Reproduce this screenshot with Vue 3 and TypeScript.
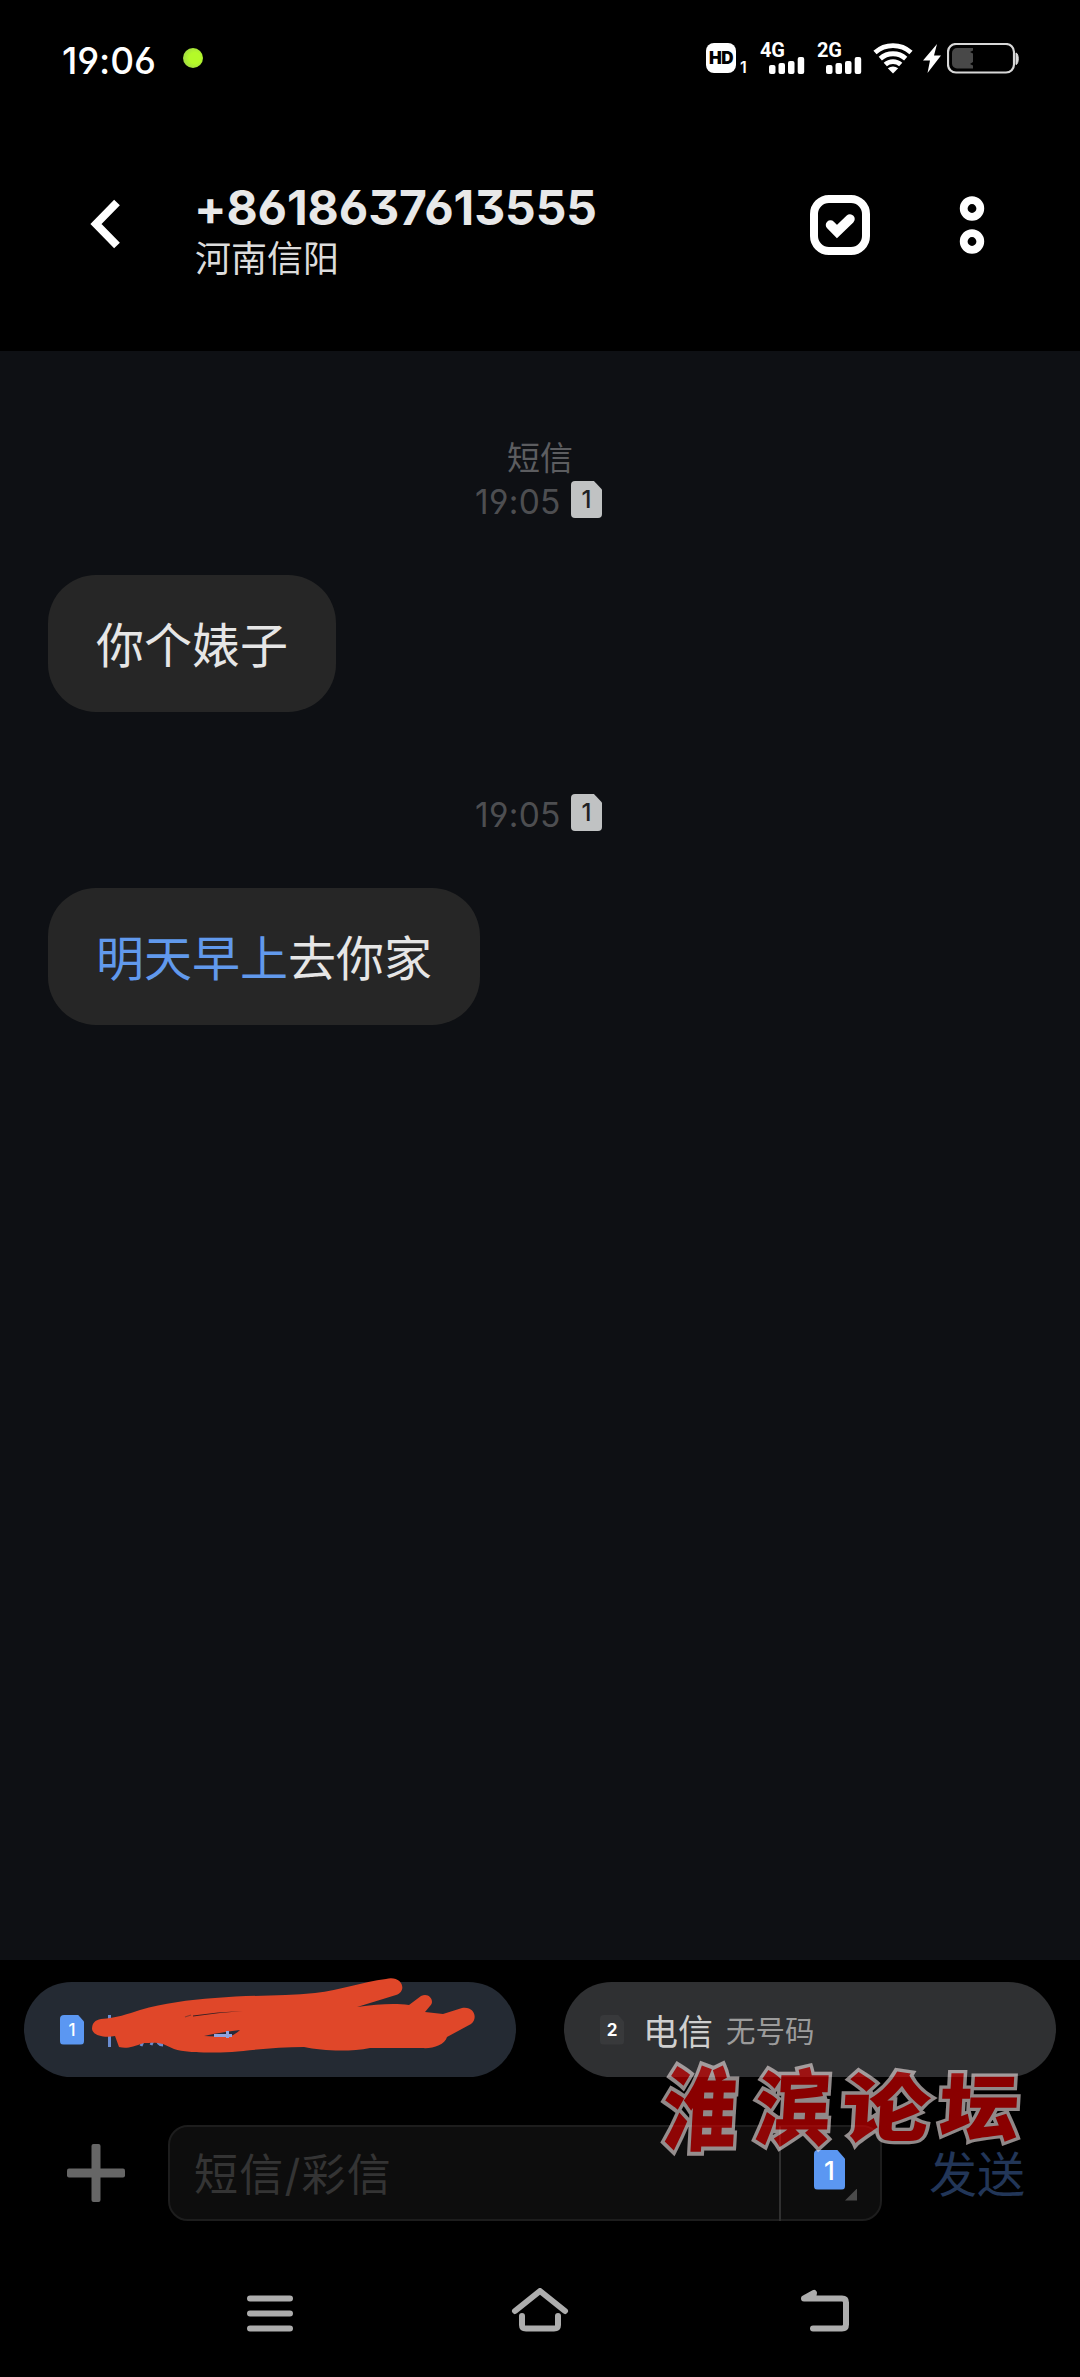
<script setup lang="ts">
interface Part { text: string; link?: boolean }
interface Message { id: number; label?: string; time: string; sim: number; parts: Part[] }

const messages: Message[] = [
  { id: 1, label: '短信', time: '19:05', sim: 1, parts: [{ text: '你个婊子' }] },
  { id: 2, time: '19:05', sim: 1, parts: [{ text: '明天早上', link: true }, { text: '去你家' }] },
]
const networks = ['4G', '2G']
const watermark = ['淮', '滨', '论', '坛']
</script>

<template>
  <div class="screen">
    <div class="status">
      <span class="clock">19:06</span>
      <i class="dot"></i>
      <div class="indicators">
        <span class="hd">HD</span>
        <span class="hd-sub">1</span>
        <div v-for="n in networks" :key="n" class="net">
          <span>{{ n }}</span>
          <svg width="36" height="17" viewBox="0 0 36 17" fill="#fff">
            <rect x="0" y="8" width="6.5" height="9" rx="2" />
            <rect x="9.5" y="6" width="6.5" height="11" rx="2" />
            <rect x="19" y="4" width="6.5" height="13" rx="2" />
            <rect x="28.7" y="0" width="6.5" height="17" rx="2" />
          </svg>
        </div>
        <svg class="wifi" width="40" height="32" viewBox="0 0 40 32" fill="none" stroke="#fff" stroke-width="4.8">
          <path d="M2 10.5a27 27 0 0 1 36 0" />
          <path d="M7.3 16.6a19 19 0 0 1 25.4 0" />
          <path d="M12.3 22.5a11.500 11.500 0 0 1 15.4 0" />
          <path d="M14.800 26.300Q20 22.500 25.200 26.300L20 31.500z" fill="#fff" stroke="none" />
        </svg>
        <svg class="bolt" width="18" height="29" viewBox="0 0 18 29" fill="#fff">
          <path d="M14 0L0 16.500h7L4.500 29 18 11.500h-7z" />
        </svg>
        <svg class="battery" width="73" height="31" viewBox="0 0 73 31">
          <rect x="1" y="1" width="66" height="28.500" rx="8" fill="none" stroke="#d8d8d8" stroke-width="2.200" />
          <path d="M10 5h16v2.500l-3 1.500 3 1.500V19l-3 2 3 1.500V25.500H10a5 5 0 0 1-5-5V10a5 5 0 0 1 5-5z" fill="#484848" />
          <path d="M69 10c3 .5 3 11 0 11.500z" fill="#ddd" stroke="#ddd" />
        </svg>
      </div>
    </div>

    <header class="header">
      <svg class="back" width="34" height="52" viewBox="0 0 34 52" fill="none" stroke="#fff" stroke-width="8">
        <path d="M28 4.500L7 26l21 21.500" />
      </svg>
      <div class="contact">
        <div class="number">+8618637613555</div>
        <div class="place">河南信阳</div>
      </div>
      <svg class="select" width="60" height="60" viewBox="0 0 60 60" fill="none" stroke="#fff">
        <rect x="4" y="4" width="52" height="52" rx="15" stroke-width="8" />
        <path d="M20.500 30l6.500 6.500 13-12.500" stroke-width="9.500" stroke-linecap="round" />
      </svg>
      <svg class="more" width="26" height="60" viewBox="0 0 26 60" fill="none" stroke="#fff" stroke-width="7.800">
        <circle cx="13" cy="13.500" r="8.300" /><circle cx="13" cy="46.500" r="8.300" />
      </svg>
    </header>

    <main class="chat">
      <section v-for="m in messages" :key="m.id" class="entry">
        <div v-if="m.label" class="label">{{ m.label }}</div>
        <div class="meta">
          <span class="time">{{ m.time }}</span>
          <span class="sim grey">{{ m.sim }}</span>
        </div>
        <div class="bubble"><span v-for="p in m.parts" :key="p.text" :class="{ link: p.link }">{{ p.text }}</span></div>
      </section>
    </main>

    <footer class="footer">
      <div class="pills">
        <div class="pill active">
          <span class="sim small blue">1</span>
          <svg class="scribble" width="492" height="95" viewBox="24 1982 492 95">
            <path d="M109.500 2015v32M141 2046l3-7M151 2045l4-9M157 2037q0 8 6 8" fill="none" stroke="#6a8cd0" stroke-width="3" />
            <path
              d="M101 2019C116 2018 128 2014 140 2010C164 2003 188 2000 215 1998C250 1995 285 1996 315 1993C341 1990 362 1982 386 1979C402 1975 408 1991 396 1995L357 2007C378 2004 395 2003 409 2005L421 1996C430 1992 435 2002 430 2006L425 2012L443 2014L462 2008C475 2006 478 2019 471 2024L447 2037C445 2045 432 2049 422 2048H370C350 2052 322 2051 304 2047C280 2047 252 2050 232 2052C208 2053 187 2053 174 2049L163 2044C155 2042 151 2043 144 2043C132 2047 127 2049 119 2047L115 2036C105 2038 93 2036 92 2029C92 2023 95 2020 101 2019Z"
              fill="#e04729" />
            <path d="M185 2017l6-2" fill="none" stroke="#8a3a2c" stroke-width="1.200" />
            <path d="M193 2015.500q25-4 50-4.500-24 1.500-50 5.500z" fill="#352025" />
            <path d="M204 2036q18-4 36-6-5 5-12 7z" fill="#272b3a" />
            <path d="M214 2035.500h18M227.500 2031v7" stroke="#8fa3df" stroke-width="3" />
          </svg>
        </div>
        <div class="pill">
          <span class="sim small dark">2</span>
          <span class="carrier">电信</span>
          <span class="nonumber">无号码</span>
        </div>
      </div>

      <div class="compose">
        <svg class="plus" width="58" height="58" viewBox="0 0 58 58" fill="#666">
          <rect x="0" y="24.500" width="58" height="9" rx="2" /><rect x="24.500" y="0" width="9" height="58" rx="2" />
        </svg>
        <div class="field">
          <span class="placeholder">短信/彩信</span>
          <div class="picker">
            <span class="sim blue">1</span>
            <i class="corner"></i>
          </div>
        </div>
        <span class="send">发送</span>
      </div>

      <div class="watermark">
        <span v-for="(c, i) in watermark" :key="c" :class="'w' + i">{{ c }}</span>
      </div>
    </footer>

    <nav class="nav">
      <svg width="46" height="44" viewBox="0 0 46 44"><path d="M3 10.500h40M3 25.500h40M3 40.500h40" /></svg>
      <svg width="58" height="44" viewBox="0 0 58 44">
        <path d="M4 23L29 3l25 20M11 28v9q0 3.500 4 3.500h28q4 0 4-3.500v-9" />
      </svg>
      <svg width="50" height="44" viewBox="0 0 50 44">
        <path d="M4 10.500h38q4 0 4 4v22q0 4-4 4H13M4 10.500L14 5l-1 4z" />
      </svg>
    </nav>
  </div>
</template>

<style>
body { background: #000; }
</style>

<style scoped>
.screen {
  width: 1080px;
  height: 2377px;
  background: #000;
  color: #e8e8e8;
  font-family: Inter, "Noto Sans CJK SC", sans-serif;
  font-feature-settings: "ss01";
  display: flex;
  flex-direction: column;
  overflow: hidden;
}
svg { display: block; flex: none; }
span { white-space: nowrap; }

.status { height: 117px; display: flex; align-items: flex-start; padding: 43px 60px 0 62px; box-sizing: border-box; }
.clock { width: 121px; font-size: 37px; line-height: 35px; font-weight: 500; color: #fff; letter-spacing: -.1px; }
.dot { width: 20px; height: 20px; margin-top: 5px; border-radius: 50%; background: radial-gradient(circle at 60% 50%, #b4fa28 35%, #a2dc42 75%); }
.indicators { margin-left: auto; display: flex; align-items: flex-start; height: 32px; color: #fff; }
.hd { width: 30px; height: 30px; border-radius: 8px; background: #fff; color: #000; font: 900 17px/31px Inter, sans-serif; text-align: center; letter-spacing: -.5px; }
.hd-sub { width: 24px; padding-left: 4px; box-sizing: border-box; font: 600 16px/16px Inter, sans-serif; margin-top: 16px; }
.net { width: 57px; display: flex; flex-direction: column; }
.net span { font: 700 20px/15px Roboto, sans-serif; height: 14px; letter-spacing: -.3px; }
.net svg { margin-left: 9px; }
.wifi { margin: -1px 0 0 -1px; }
.bolt { margin: 1px 0 0 10px; }
.battery { margin-left: 6px; }

.header { height: 234px; display: flex; align-items: flex-start; padding-left: 89px; box-sizing: border-box; }
.back { margin-top: 81px; }
.contact { width: 612px; margin-left: 72px; padding-top: 62px; }
.number { font-size: 48px; line-height: 58px; font-weight: 650; letter-spacing: -.1px; margin-left: -1px; }
.place { font-size: 36px; line-height: 44px; color: #dcdcdc; }
.select { margin: 78px 0 0 3px; }
.more { margin: 78px 0 0 89px; }

.chat { height: 1609px; box-sizing: border-box; background: #0e1014; padding: 86px 48px 0; }
.entry { display: flex; flex-direction: column; margin-bottom: 79px; }
.label { font-size: 33px; line-height: 42px; text-align: center; color: #5c5d60; height: 41px; }
.meta { display: flex; justify-content: center; align-items: center; height: 44px; gap: 12px; }
.meta .sim { margin: -1px 1px 0 -1px; }
.time { width: 83px; font-size: 33.500px; line-height: 44px; color: #4d4e51; padding-top: 3px; letter-spacing: .3px; margin-left: -2px; margin-right: 2px; }
.bubble { align-self: flex-start; height: 137px; box-sizing: border-box; margin-top: 53px; padding: 0 48px; border-radius: 48px; background: #262626; font-size: 48px; line-height: 142px; color: #e6e6e6; }
.link { color: #6199ec; }

.sim { display: block; width: 31px; height: 37px; border-radius: 4px; clip-path: polygon(0 0, 74% 0, 100% 23%, 100% 100%, 0 100%); font: 500 24px/37px Inter, sans-serif; text-align: center; flex: none; }
.grey { background: #c0c2c3; color: #202124; }
.blue { background: #5b97f2; color: #fff; }
.small { width: 24px; height: 30px; font-size: 17px; line-height: 31px; }
.dark { background: #38393b; color: #fff; font-weight: 700; }

.footer { position: relative; height: 290px; padding-top: 22px; box-sizing: border-box; }
.pills { display: flex; gap: 48px; padding: 0 24px; }
.pill { position: relative; width: 492px; height: 95px; padding-left: 36px; box-sizing: border-box; border-radius: 48px; background: #2f3032; display: flex; align-items: center; }
.active { background: #242a33; }
.scribble { position: absolute; left: 0; top: 0; overflow: visible; }
.carrier { margin-left: 19px; font-size: 35px; color: #cfcfcf; }
.nonumber { margin-left: 13px; margin-top: -2px; font-size: 29.500px; color: #9b9b9b; }

.compose { display: flex; align-items: center; height: 96px; margin-top: 48px; padding-left: 67px; }
.field { width: 714px; height: 96px; box-sizing: border-box; margin-left: 43px; border: 2px solid #1d1d1d; border-radius: 20px; background: #0d0d0d; display: flex; align-items: center; padding-left: 24px; }
.placeholder { flex: 1; font-size: 44px; letter-spacing: 1.200px; margin-top: -2px; color: #343434; }
.picker { position: relative; width: 101px; height: 95px; border-left: 2px solid #303030; box-sizing: border-box; padding: 24px 0 0 33px; }
.picker .sim { height: 40px; font-size: 26px; line-height: 41px; }
.corner { position: absolute; left: 64px; top: 63px; width: 12px; height: 12px; background: #4a4a4a; clip-path: polygon(100% 0, 100% 100%, 0 100%); }
.send { margin-left: 47px; margin-top: -4px; font-size: 48px; color: #223658; }

.watermark { position: absolute; left: 654px; top: 94px; height: 98px; display: flex; opacity: .6; }
.watermark span { display: block; width: 93px; text-align: center; font: 900 80px/98px "Noto Sans CJK SC", sans-serif; color: #e60000; -webkit-text-stroke: 7px #f0e4e4; paint-order: stroke fill; }
.w0 { transform: scale(.92, 1.14) skewX(-4deg); }
.w1 { transform: scale(.95, 1.04) skewX(-4deg); }
.w2 { transform: scale(1.1, .94) skewX(-3deg); }
.w3 { transform: scale(1, .92) skewX(-3deg); }

.nav { height: 127px; display: flex; padding: 38px 0 0 247px; box-sizing: border-box; }
.nav svg { fill: none; stroke: #adadad; stroke-width: 6; stroke-linecap: round; stroke-linejoin: round; }
.nav svg:nth-child(2) { margin-left: 218px; }
.nav svg:nth-child(3) { margin-left: 231px; }
</style>
